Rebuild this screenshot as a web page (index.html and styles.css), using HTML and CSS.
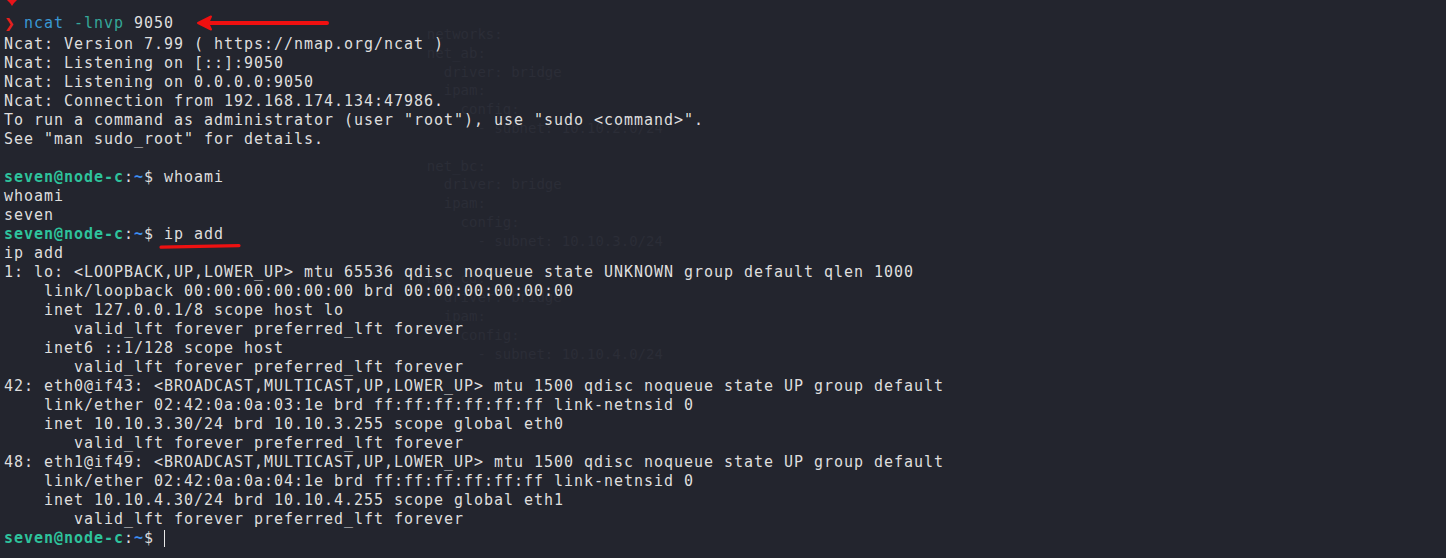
FILE: index.html
```html
<!DOCTYPE html>
<html lang="en">
<head>
<meta charset="utf-8">
<title>Terminal</title>
<link rel="stylesheet" href="styles.css">
</head>
<body>
<div class="screen">
  <pre class="ghost">  networks:
  net_ab:
    driver: bridge
    ipam:
      config:
        - subnet: 10.10.2.0/24

  net_bc:
    driver: bridge
    ipam:
      config:
        - subnet: 10.10.3.0/24

  net_cd:
    driver: bridge
    ipam:
      config:
        - subnet: 10.10.4.0/24</pre>

  <svg class="mark-top" width="14" height="8" viewBox="0 0 14 8"><path d="M2 0 L12 0 L9 3 L7 6 L5 3 Z" fill="#e8141a"/></svg>
  <svg class="mark-arrow" width="136" height="18" viewBox="0 0 136 18"><path d="M14 9 L131 9" stroke="#f01010" stroke-width="4" stroke-linecap="round"/><path d="M2 9 L15 2.5 L12 9 L15 15.5 Z" fill="#f01010" stroke="#f01010" stroke-width="2" stroke-linejoin="round"/></svg>
  <svg class="mark-under" width="84" height="8" viewBox="0 0 84 8"><path d="M2 5.2 Q40 4.2 80 3.6" stroke="#ee1111" stroke-width="3.2" fill="none" stroke-linecap="round"/></svg>

  <div class="term">
    <div class="line first"><span class="chev">❯</span><span class="cmd">ncat</span> <span class="arg">-lnvp</span> 9050</div>
    <div class="line">Ncat: Version 7.99 ( https://nmap.org/ncat )</div>
    <div class="line">Ncat: Listening on [::]:9050</div>
    <div class="line">Ncat: Listening on 0.0.0.0:9050</div>
    <div class="line">Ncat: Connection from 192.168.174.134:47986.</div>
    <div class="line">To run a command as administrator (user "root"), use "sudo &lt;command&gt;".</div>
    <div class="line">See "man sudo_root" for details.</div>
    <div class="line"> </div>
    <div class="line"><span class="user">seven@node-c</span>:<span class="tilde">~</span>$ whoami</div>
    <div class="line">whoami</div>
    <div class="line">seven</div>
    <div class="line"><span class="user">seven@node-c</span>:<span class="tilde">~</span>$ ip add</div>
    <div class="line">ip add</div>
    <div class="line">1: lo: &lt;LOOPBACK,UP,LOWER_UP&gt; mtu 65536 qdisc noqueue state UNKNOWN group default qlen 1000</div>
    <div class="line">    link/loopback 00:00:00:00:00:00 brd 00:00:00:00:00:00</div>
    <div class="line">    inet 127.0.0.1/8 scope host lo</div>
    <div class="line">       valid_lft forever preferred_lft forever</div>
    <div class="line">    inet6 ::1/128 scope host</div>
    <div class="line">       valid_lft forever preferred_lft forever</div>
    <div class="line">42: eth0@if43: &lt;BROADCAST,MULTICAST,UP,LOWER_UP&gt; mtu 1500 qdisc noqueue state UP group default</div>
    <div class="line">    link/ether 02:42:0a:0a:03:1e brd ff:ff:ff:ff:ff:ff link-netnsid 0</div>
    <div class="line">    inet 10.10.3.30/24 brd 10.10.3.255 scope global eth0</div>
    <div class="line">       valid_lft forever preferred_lft forever</div>
    <div class="line">48: eth1@if49: &lt;BROADCAST,MULTICAST,UP,LOWER_UP&gt; mtu 1500 qdisc noqueue state UP group default</div>
    <div class="line">    link/ether 02:42:0a:0a:04:1e brd ff:ff:ff:ff:ff:ff link-netnsid 0</div>
    <div class="line">    inet 10.10.4.30/24 brd 10.10.4.255 scope global eth1</div>
    <div class="line">       valid_lft forever preferred_lft forever</div>
    <div class="line"><span class="user">seven@node-c</span>:<span class="tilde">~</span>$ <span class="cursor"></span></div>
  </div>
</div>
</body>
</html>
```

FILE: styles.css
```css
html, body {
  margin: 0;
  padding: 0;
  background: #23252e;
}

.screen {
  position: relative;
  width: 1446px;
  height: 558px;
  overflow: hidden;
  background: #23252e;
}

.ghost {
  position: absolute;
  left: 410px;
  top: 25px;
  margin: 0;
  font-family: "DejaVu Sans Mono", monospace;
  font-size: 14px;
  line-height: 18.8px;
  color: #2b2d37;
  white-space: pre;
}

.term {
  position: relative;
  padding: 14px 0 0 4px;
  font-family: "DejaVu Sans Mono", monospace;
  font-size: 15px;
  letter-spacing: 0.97px;
  line-height: 19px;
  color: #dedede;
}

.line {
  white-space: pre;
  height: 19px;
}

.line.first {
  margin-bottom: 2px;
}

.chev {
  display: inline-block;
  width: 20px;
  color: #e5201c;
  font-family: "DejaVu Sans", sans-serif;
  font-size: 13px;
  font-weight: bold;
  letter-spacing: 0;
}

.cmd {
  color: #3a98d4;
}

.arg {
  color: #35a899;
}

.user {
  color: #2ec39c;
  font-weight: bold;
}

.tilde {
  color: #3d8ff0;
  font-weight: bold;
}

.cursor {
  display: inline-block;
  width: 1px;
  height: 17px;
  background: #e8e8e8;
  vertical-align: -4px;
}

.mark-top {
  position: absolute;
  left: 5px;
  top: 0;
}

.mark-arrow {
  position: absolute;
  left: 196px;
  top: 14px;
}

.mark-under {
  position: absolute;
  left: 159px;
  top: 242px;
}
```
